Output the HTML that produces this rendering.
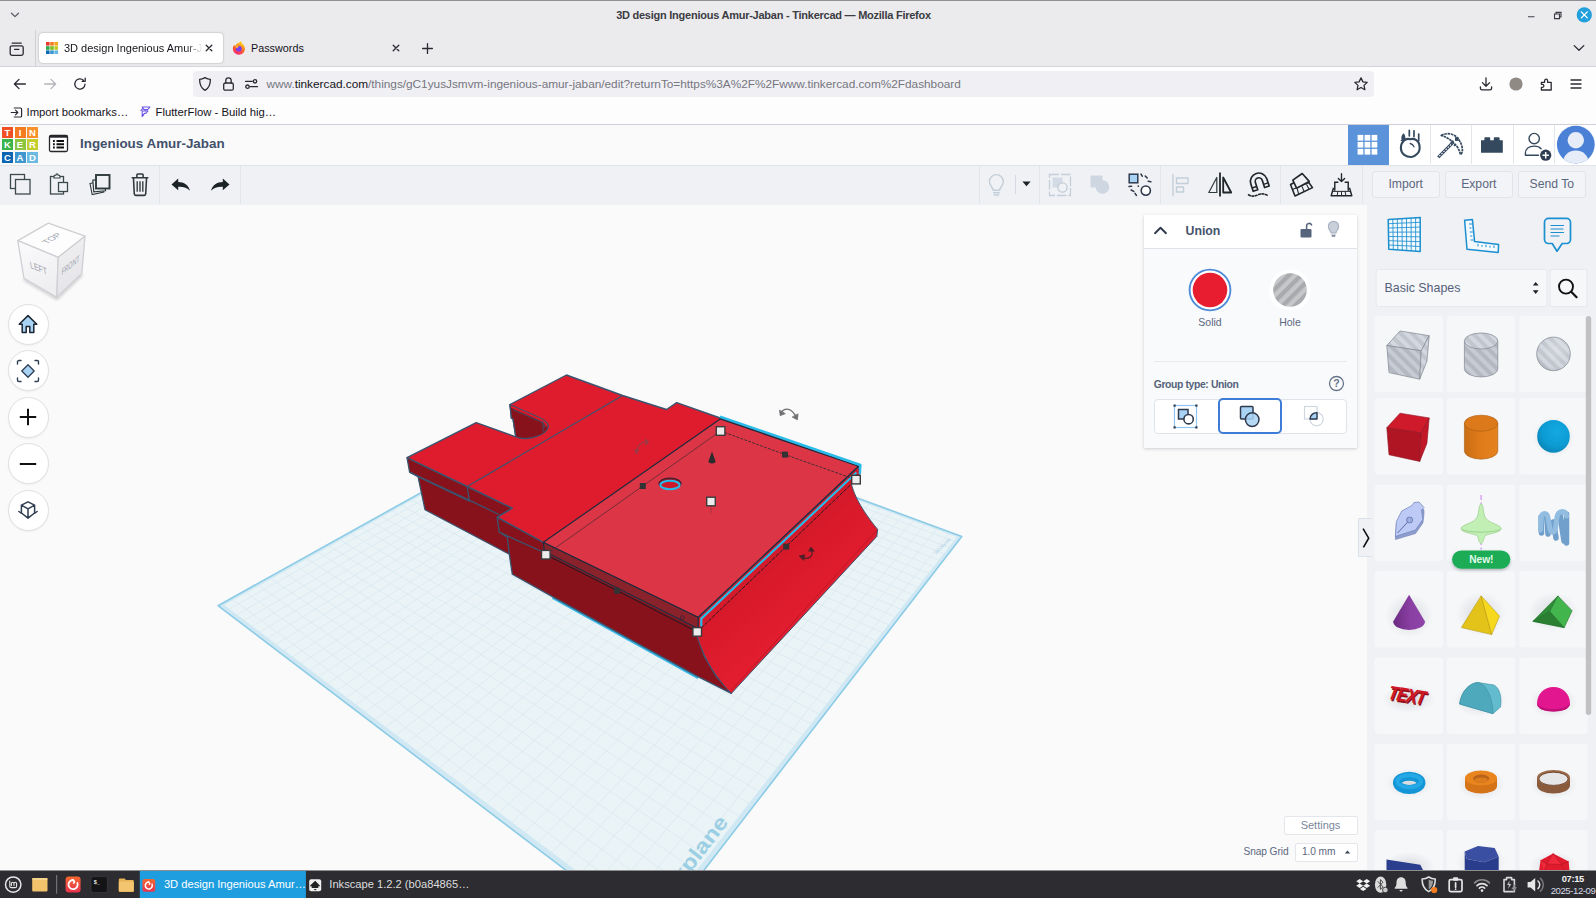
<!DOCTYPE html>
<html lang="en">
<head>
<meta charset="utf-8">
<title>3D design Ingenious Amur-Jaban - Tinkercad</title>
<style>
*{box-sizing:border-box;margin:0;padding:0}
html,body{width:1596px;height:898px;overflow:hidden;background:#fafafa;font-family:"Liberation Sans","DejaVu Sans",sans-serif;color:#15141a}
.abs{position:absolute}
#root{position:relative;width:1596px;height:898px;overflow:hidden}
/* ---------- firefox chrome ---------- */
#titlebar{left:0;top:0;width:1596px;height:30px;background:#ebebee;border-top:1px solid #8f8f96}
#titlebar .t{left:0;width:1547px;top:8px;text-align:center;font-size:11px;font-weight:bold;color:#3c3c42;letter-spacing:-0.245px}
#tabbar{left:0;top:30px;width:1596px;height:36px;background:#ebebee}
.tab{top:33px;height:30px;border-radius:4px;font-size:11.5px;color:#15141a}
#tab1{left:39px;width:184px;background:#fff;box-shadow:0 0 2px rgba(0,0,0,.35)}
#navbar{left:0;top:66px;width:1596px;height:35px;background:#fdfdfe;border-top:1px solid #d4d4da}
#urlbar{left:193px;top:71px;width:1181px;height:26px;background:#f0f0f4;border-radius:4px}
#bookbar{left:0;top:101px;width:1596px;height:23px;background:#fdfdfe;font-size:11.5px;color:#15141a}
#chromeline{left:0;top:124px;width:1596px;height:1px;background:#cfcfd8}

.ico{position:absolute;overflow:visible}
.ico *{vector-effect:none}
.s15{fill:none;stroke:#2b2a33;stroke-width:1.3;stroke-linecap:round;stroke-linejoin:round}
.tabtxt{top:8.500px;font-size:11px;white-space:nowrap;overflow:hidden}
#urltxt{left:266.5px;top:77px;font-size:11.84px;color:#76767f;white-space:nowrap;letter-spacing:-0.02px}
#urltxt b{font-weight:normal;color:#15141a}
.bm{top:106px;font-size:11.3px;white-space:nowrap;color:#15141a}
/* ---------- tinkercad ---------- */
.navb{position:absolute;left:7.500px;width:41px;height:41px;margin-top:-.500px;border-radius:50%;background:#fff;border:1px solid #e0e0e3;box-shadow:0 1px 2px rgba(0,0,0,.05)}
#insp{left:1144px;top:214.500px;width:212.500px;height:233.500px;background:#f9fafb;box-shadow:0 1px 3px rgba(40,50,70,.22)}
#insp .hd{left:0;top:0;width:100%;height:34px;background:#fff;border-bottom:1px solid #dfe2e8}
.lbl{position:absolute;font-size:10.500px;color:#5b6780;text-align:center;white-space:nowrap}

.tki{fill:none;stroke:#2f3a3d;stroke-width:1.400;stroke-linejoin:round;stroke-linecap:round}
.tkf{fill:none;stroke:#c3ced9;stroke-width:1.400;stroke-linejoin:round;stroke-linecap:round}
.vsep{position:absolute;width:1px;background:#e2e5ea}
.tbtn{position:absolute;top:171px;height:27px;border:1px solid #e1e4e9;border-radius:3px;background:#f3f4f7;font-size:12.200px;color:#5b6780;text-align:center;line-height:24px}
#tkname{left:80px;top:136px;font-size:13.400px;font-weight:bold;color:#42516a;white-space:nowrap;letter-spacing:0}

#tkhead{left:0;top:125px;width:1596px;height:41px;background:#fafafb;border-bottom:1px solid #dfe2e8}
#tktool{left:0;top:166px;width:1596px;height:39.500px;background:#f0f1f4;border-bottom:1px solid #e4e6ea}
#viewport{left:0;top:205px;width:1367px;height:665px;background:#fafafa;overflow:hidden}
#side{left:1367px;top:205px;width:229px;height:665px;background:#f0f1f4;overflow:hidden}
#taskbar{left:0;top:870px;width:1596px;height:28px;background:#2d2c31;border-top:1px solid #8e8e91}
</style>
</head>
<body>
<div id="root">

<!-- ===== Firefox title bar ===== -->
<div id="titlebar" class="abs">
  <div class="abs t">3D design Ingenious Amur-Jaban - Tinkercad — Mozilla Firefox</div>
</div>
<svg class="ico" style="left:9px;top:10px" width="12" height="10" viewBox="0 0 12 10"><path class="s15" style="stroke:#5b5b66" d="M2.5 3.2 L6 6.6 L9.5 3.2"/></svg>
<!-- window buttons -->
<svg class="ico" style="left:1524px;top:6px" width="70" height="18" viewBox="0 0 70 18">
  <path d="M4 10.7 H10.5" stroke="#5b5b66" stroke-width="1.2" fill="none"/>
  <path d="M30.5 8 h5 v4.6 h-5 z M32 8 V6.4 h5 v4.6 h-1.4" stroke="#3a3a44" stroke-width="1.1" fill="none"/>
  <circle cx="60.3" cy="8.9" r="7.6" fill="#229fdd"/>
  <path d="M57.3 5.9 L63.3 11.9 M63.3 5.9 L57.3 11.9" stroke="#fff" stroke-width="1.3" stroke-linecap="round"/>
</svg>
<div id="tabbar" class="abs"></div>
<div class="abs" style="left:35px;top:30px;width:1px;height:36px;background:#cfcfd6"></div>
<!-- firefox view icon -->
<svg class="ico" style="left:9px;top:41.500px" width="16" height="15" viewBox="0 0 16 15">
  <path class="s15" d="M3.2 1.2 H12.2"/>
  <rect class="s15" x="1.2" y="3.8" width="13" height="9.6" rx="1.8"/>
  <path class="s15" d="M5.6 7.4 H9.8"/>
</svg>
<div id="tab1" class="abs tab">
  <svg class="ico" style="left:7px;top:9px" width="12" height="12" viewBox="0 0 12 12">
    <rect x="0" y="0" width="3.6" height="3.6" fill="#e8382d"/><rect x="4.2" y="0" width="3.6" height="3.6" fill="#f47b20"/><rect x="8.4" y="0" width="3.6" height="3.6" fill="#f9a51a"/>
    <rect x="0" y="4.2" width="3.6" height="3.6" fill="#2eaa4a"/><rect x="4.2" y="4.2" width="3.6" height="3.6" fill="#7cbd26"/><rect x="8.4" y="4.2" width="3.6" height="3.6" fill="#c2c922"/>
    <rect x="0" y="8.4" width="3.6" height="3.6" fill="#0c69b4"/><rect x="4.2" y="8.4" width="3.6" height="3.6" fill="#3a96cf"/><rect x="8.4" y="8.4" width="3.6" height="3.6" fill="#66b9e0"/>
  </svg>
  <div class="abs tabtxt" style="left:25px;width:139px;-webkit-mask-image:linear-gradient(90deg,#000 122px,transparent 139px);mask-image:linear-gradient(90deg,#000 122px,transparent 139px)">3D design Ingenious Amur-Jaban - Tinkercad</div>
  <svg class="ico" style="left:165px;top:10px" width="10" height="10" viewBox="0 0 10 10"><path d="M2.200 2.200 L7.800 7.800 M7.800 2.200 L2.200 7.800" stroke="#2b2a33" stroke-width="1.3" stroke-linecap="round"/></svg>
</div>
<div class="abs tab" style="left:226px;width:184px">
  <svg class="ico" style="left:6px;top:8px" width="14" height="14" viewBox="0 0 14 14">
    <defs><linearGradient id="ffg" x1=".7" y1="0" x2=".3" y2="1"><stop offset="0" stop-color="#ffe226"/><stop offset=".35" stop-color="#ff9a1e"/><stop offset=".7" stop-color="#ff4a3a"/><stop offset="1" stop-color="#f5237e"/></linearGradient></defs>
    <path d="M7 1.600 c.8 -.2 1.400 -.8 1.700 -1.500 c1 1 1.500 2 1.700 3 c1.300 .8 2.600 2.600 2.600 4.600 a6.100 6.100 0 0 1 -12.200 0 c0 -2 .8 -3.400 1.700 -4.300 c-.1 .8 .1 1.500 .5 1.900 c.8 -1.700 2.200 -3.100 4 -3.700z" fill="url(#ffg)"/>
    <circle cx="6.800" cy="7.700" r="2.900" fill="#7a3df0"/>
    <path d="M3.700 5.300 c1.300 -.7 3 -.5 3.900 .4 c-1.400 0 -2.200 .7 -2.400 1.700 c-.9 -.4 -1.500 -1.200 -1.500 -2.100z" fill="#ffb52e"/>
  </svg>
  <div class="abs tabtxt" style="left:25px;width:130px;font-size:10.8px">Passwords</div>
  <svg class="ico" style="left:165px;top:10px" width="10" height="10" viewBox="0 0 10 10"><path d="M2.200 2.200 L7.800 7.800 M7.800 2.200 L2.200 7.800" stroke="#2b2a33" stroke-width="1.3" stroke-linecap="round"/></svg>
</div>
<svg class="ico" style="left:421px;top:42px" width="13" height="13" viewBox="0 0 13 13"><path d="M6.5 1.6 V11.400 M1.6 6.5 H11.400" stroke="#2b2a33" stroke-width="1.3" stroke-linecap="round"/></svg>
<svg class="ico" style="left:1572px;top:43px" width="14" height="10" viewBox="0 0 14 10"><path class="s15" d="M2.2 2.600 L7 7.300 L11.800 2.600"/></svg>

<div id="navbar" class="abs"></div>
<!-- back / forward / reload -->
<svg class="ico" style="left:12px;top:76px" width="16" height="16" viewBox="0 0 16 16"><path class="s15" d="M13.400 8 H2.600 M7 3.400 L2.400 8 L7 12.600"/></svg>
<svg class="ico" style="left:42px;top:76px" width="16" height="16" viewBox="0 0 16 16"><path class="s15" style="stroke:#b4b4bb" d="M2.600 8 H13.400 M9 3.400 L13.600 8 L9 12.600"/></svg>
<svg class="ico" style="left:72px;top:76px" width="16" height="16" viewBox="0 0 16 16"><path class="s15" d="M13 8.200 a5.100 5.100 0 1 1 -1.600 -3.900 M13.200 2.200 V5.300 H10.100"/></svg>
<div id="urlbar" class="abs"></div>
<svg class="ico" style="left:198px;top:76px" width="14" height="16" viewBox="0 0 14 16"><path class="s15" d="M7 1.600 C5 2.900 3.200 3.300 1.600 3.300 C1.600 8.800 3.200 12.400 7 14.400 C10.800 12.400 12.400 8.800 12.400 3.300 C10.800 3.300 9 2.900 7 1.600z"/></svg>
<svg class="ico" style="left:222px;top:76px" width="13" height="16" viewBox="0 0 13 16"><rect class="s15" x="1.700" y="7" width="9.600" height="7.200" rx="1.500"/><path class="s15" d="M3.800 7 V4.600 a2.700 2.700 0 0 1 5.400 0 V7"/></svg>
<svg class="ico" style="left:244px;top:78px" width="15" height="12" viewBox="0 0 15 12"><path class="s15" d="M1.500 3.300 H8.300 M6.200 8.700 H13.500"/><circle class="s15" cx="11" cy="3.300" r="1.700"/><circle class="s15" cx="3.500" cy="8.700" r="1.700"/></svg>
<div id="urltxt" class="abs">www.<b>tinkercad.com</b>/things/gC1yusJsmvm-ingenious-amur-jaban/edit?returnTo=https%3A%2F%2Fwww.tinkercad.com%2Fdashboard</div>
<svg class="ico" style="left:1353px;top:76px" width="16" height="16" viewBox="0 0 16 16"><path class="s15" d="M8 1.900 L9.900 5.900 L14.200 6.400 L11 9.400 L11.900 13.700 L8 11.500 L4.100 13.700 L5 9.400 L1.800 6.400 L6.100 5.900z"/></svg>
<svg class="ico" style="left:1478px;top:76px" width="16" height="16" viewBox="0 0 16 16"><path class="s15" d="M8 1.800 V10 M4.400 6.600 L8 10.200 L11.600 6.600 M2.400 10.800 V12.200 a1.600 1.600 0 0 0 1.600 1.600 H12 a1.600 1.600 0 0 0 1.600 -1.600 V10.800"/></svg>
<svg class="ico" style="left:1509px;top:77px" width="14" height="14" viewBox="0 0 14 14"><circle cx="7" cy="7" r="6.600" fill="#8f8a84"/></svg>
<svg class="ico" style="left:1539px;top:76px" width="16" height="16" viewBox="0 0 16 16"><path class="s15" d="M2.400 6.300 H5.600 V4.700 a1.500 1.500 0 1 1 3 0 V6.300 H12.200 V14 H2.400 V11.300 H3.400 a1.500 1.500 0 1 0 0 -3 H2.400z"/></svg>
<svg class="ico" style="left:1569px;top:77px" width="14" height="14" viewBox="0 0 14 14"><path d="M2 3 H12 M2 7 H12 M2 11 H12" stroke="#2b2a33" stroke-width="1.300" stroke-linecap="round"/></svg>

<div id="bookbar" class="abs"></div>
<svg class="ico" style="left:10px;top:106px" width="13" height="13" viewBox="0 0 13 13"><path class="s15" style="stroke-width:1.200" d="M4.200 2 H10.600 a1 1 0 0 1 1 1 V10 a1 1 0 0 1 -1 1 H4.200 M1.200 6.500 H7.600 M5.500 4.200 L7.800 6.500 L5.500 8.800"/></svg>
<div class="abs bm" style="left:26.500px">Import bookmarks…</div>
<svg class="ico" style="left:139px;top:105px" width="13" height="14" viewBox="0 0 13 14"><path d="M3.200 2 H11 L8.600 4.600 H5 Z M3.200 6 H9 L6.800 8.400 H5.400 L3.200 10.800 V8.400 Z M1.600 5.800 L3.800 3.400 M2.800 12 L5.200 9.400" fill="none" stroke="#6a55e6" stroke-width="1.100" stroke-linejoin="round"/></svg>
<div class="abs bm" style="left:155.500px">FlutterFlow - Build hig…</div>
<div id="chromeline" class="abs"></div>

<!-- ===== Tinkercad ===== -->

<div id="tkhead" class="abs"></div>
<div class="abs" style="left:2px;top:126.5px;width:11px;height:11px;background:#f04e23;color:#fff;font-size:9.500px;font-weight:bold;text-align:center;line-height:11.500px">T</div><div class="abs" style="left:14.5px;top:126.5px;width:11px;height:11px;background:#f47b20;color:#fff;font-size:9.500px;font-weight:bold;text-align:center;line-height:11.500px">I</div><div class="abs" style="left:27px;top:126.5px;width:11px;height:11px;background:#f9922b;color:#fff;font-size:9.500px;font-weight:bold;text-align:center;line-height:11.500px">N</div><div class="abs" style="left:2px;top:139px;width:11px;height:11px;background:#3bb54a;color:#fff;font-size:9.500px;font-weight:bold;text-align:center;line-height:11.500px">K</div><div class="abs" style="left:14.5px;top:139px;width:11px;height:11px;background:#8cc63e;color:#fff;font-size:9.500px;font-weight:bold;text-align:center;line-height:11.500px">E</div><div class="abs" style="left:27px;top:139px;width:11px;height:11px;background:#c4cf2e;color:#fff;font-size:9.500px;font-weight:bold;text-align:center;line-height:11.500px">R</div><div class="abs" style="left:2px;top:151.5px;width:11px;height:11px;background:#0b67b2;color:#fff;font-size:9.500px;font-weight:bold;text-align:center;line-height:11.500px">C</div><div class="abs" style="left:14.5px;top:151.5px;width:11px;height:11px;background:#3f97d0;color:#fff;font-size:9.500px;font-weight:bold;text-align:center;line-height:11.500px">A</div><div class="abs" style="left:27px;top:151.5px;width:11px;height:11px;background:#6abbe3;color:#fff;font-size:9.500px;font-weight:bold;text-align:center;line-height:11.500px">D</div>
<svg class="ico" style="left:48px;top:134px" width="21" height="19" viewBox="0 0 21 19">
  <rect x="1.500" y="1.500" width="18" height="16" rx="1.500" fill="#fff" stroke="#26272b" stroke-width="1.300"/>
  <rect x="1.500" y="1.500" width="18" height="2.200" fill="#26272b"/>
  <path d="M5 7 h1.800 M8.500 7 h7.500 M5 10.300 h1.800 M8.500 10.300 h7.500 M5 13.600 h1.800 M8.500 13.600 h7.500" stroke="#111" stroke-width="2" fill="none"/>
</svg>
<div id="tkname" class="abs">Ingenious Amur-Jaban</div>
<!-- right header buttons -->
<div class="abs" style="left:1347.500px;top:125px;width:248.500px;height:39.500px;background:#fff"></div>
<div class="abs" style="left:1347.500px;top:125px;width:41px;height:39.500px;background:#5b93da"></div>
<svg class="ico" style="left:1357px;top:134px" width="22" height="22" viewBox="0 0 22 22"><g fill="#fff">
<rect x=".6" y=".9" width="5.700" height="5.700"/><rect x="7.600" y=".9" width="5.700" height="5.700"/><rect x="14.600" y=".9" width="5.700" height="5.700"/>
<rect x=".6" y="7.900" width="5.700" height="5.700"/><rect x="7.600" y="7.900" width="5.700" height="5.700"/><rect x="14.600" y="7.900" width="5.700" height="5.700"/>
<rect x=".6" y="14.900" width="5.700" height="5.700"/><rect x="7.600" y="14.900" width="5.700" height="5.700"/><rect x="14.600" y="14.900" width="5.700" height="5.700"/></g></svg>
<div class="vsep" style="left:1430px;top:125px;height:39px"></div>
<div class="vsep" style="left:1471px;top:125px;height:39px"></div>
<div class="vsep" style="left:1513px;top:125px;height:39px"></div>
<div class="vsep" style="left:1554px;top:125px;height:39px"></div>
<!-- sim lab (apple) -->
<svg class="ico" style="left:1390px;top:125px" width="40" height="40" viewBox="1390 125 40 40">
  <path d="M1410.200,139.200 C1405,137.500 1400.600,142.500 1400.900,148.500 C1401.200,153.800 1406,157.200 1411.500,157 C1414,157 1415.500,155.500 1417,154 C1419.500,152 1420,148.500 1419.400,145 C1418.600,141 1415,138 1410.200,139.200z" fill="none" stroke="#34495e" stroke-width="2.100" stroke-linejoin="round"/>
  <path d="M1410.200,143.500 C1412,144 1413.300,145.200 1414,146.800" fill="none" stroke="#34495e" stroke-width="1.300" stroke-linecap="round"/>
  <path d="M1409.300,130.400 V135.800 M1414,130.800 V136.600 M1418.700,134 V140.600" stroke="#34495e" stroke-width="1.700" stroke-linecap="round" fill="none"/>
  <path d="M1403.800,133.200 C1405.800,135.600 1405.800,138.600 1404.600,141 L1400.200,141 L1401.600,139.800 C1400.800,137.400 1401.600,134.800 1403.800,133.200z" fill="#34495e"/>
</svg>
<!-- pickaxe -->
<svg class="ico" style="left:1431px;top:125px" width="40" height="40" viewBox="1431 125 40 40">
  <path d="M1439.300,156.200 L1452.200,143.200" stroke="#34495e" stroke-width="3" stroke-linecap="square" fill="none"/>
  <path d="M1439.300,156.200 L1452.200,143.200" stroke="#fff" stroke-width="1.100" stroke-dasharray="1.500 1.500" fill="none"/>
  <path d="M1441.200,135.400 C1446,133 1451,133.200 1455,135.800 C1459.500,139 1462.200,144.500 1462.400,150 C1462.400,152 1461.800,153.800 1460.400,154.600 C1459.600,150 1457.200,146 1453.800,143.200 L1450.800,140.400 C1448,138 1445,136.800 1441.200,135.400z" fill="#fff" stroke="#34495e" stroke-width="1.700" stroke-linejoin="round" stroke-dasharray="2.600 .7"/>
  <rect x="1455" y="137.300" width="3.600" height="3.600" fill="#34495e"/>
  <path d="M1451,143 l2.400,-2.400 M1454,146 l1.500,-1.500" stroke="#34495e" stroke-width="1.600" fill="none"/>
</svg>
<!-- brick -->
<svg class="ico" style="left:1480px;top:135px" width="24" height="19" viewBox="1480 135 24 19">
  <path d="M1481,140.200 H1484.400 V138 a.8 .8 0 0 1 .8 -.8 H1489.400 a.8 .8 0 0 1 .8 .8 V140.200 H1493.800 V138 a.8 .8 0 0 1 .8 -.8 H1498.800 a.8 .8 0 0 1 .8 .8 V140.200 H1502.800 V152.800 H1481z" fill="#34495e"/>
</svg>
<!-- person plus -->
<svg class="ico" style="left:1520px;top:130px" width="32" height="32" viewBox="0 0 32 32">
  <circle cx="14.200" cy="8.600" r="5.200" fill="none" stroke="#34485f" stroke-width="1.400"/>
  <path d="M5.400 25.200 V23.500 c0 -4.600 3.400 -7.400 8.800 -7.400 c3 0 5.400 .9 6.900 2.600 M5.400 25.200 H18.500" fill="none" stroke="#34485f" stroke-width="1.400" stroke-linecap="round"/>
  <circle cx="25.700" cy="25.200" r="5.600" fill="#2f3d52"/>
  <path d="M25.700 22 V28.400 M22.500 25.200 H28.900" stroke="#fff" stroke-width="1.500"/>
</svg>
<!-- avatar -->
<svg class="ico" style="left:1556px;top:124.500px" width="40" height="40" viewBox="0 0 40 40">
  <defs><clipPath id="avc"><circle cx="19.800" cy="19.600" r="18.900"/></clipPath></defs>
  <circle cx="19.800" cy="19.600" r="18.900" fill="#4a81d7"/>
  <g clip-path="url(#avc)"><circle cx="19.800" cy="15.200" r="8.200" fill="#e6edf9"/><ellipse cx="19.800" cy="36.500" rx="12.500" ry="11" fill="#e6edf9"/></g>
</svg>

<div id="tktool" class="abs"></div>
<!-- left tools -->
<svg class="ico" style="left:9px;top:173px" width="23" height="23" viewBox="0 0 23 23"><rect x="1.500" y="1.500" width="14" height="14" fill="#f0f1f4" stroke="#3d4a4c" stroke-width="1.300"/><rect x="6.500" y="6.500" width="14.500" height="14.500" fill="#f0f1f4" stroke="#3d4a4c" stroke-width="1.300"/></svg>
<svg class="ico" style="left:49px;top:173px" width="21" height="23" viewBox="0 0 21 23"><rect x="1.500" y="3.500" width="13" height="17.500" fill="#f0f1f4" stroke="#3d4a4c" stroke-width="1.300"/><path d="M5 3.600 c0 -1 .6 -1.500 1.600 -1.500 h.300 c.100 -.8 .5 -1.200 1.100 -1.200 s1 .4 1.100 1.200 h.300 c1 0 1.600 .5 1.600 1.500 v1.400 H5z" fill="#f0f1f4" stroke="#3d4a4c" stroke-width="1.200"/><rect x="9.500" y="9.500" width="9" height="9" fill="#f0f1f4" stroke="#3d4a4c" stroke-width="1.300"/></svg>
<svg class="ico" style="left:88px;top:173px" width="24" height="24" viewBox="0 0 24 24"><g fill="#f0f1f4" stroke="#2f3a3d"><path d="M2 10.500 L13.500 8 L15.800 19 L4.200 21.500z" stroke-width="1.100"/><path d="M4.800 7.200 L16.600 6.200 L17.500 17.800 L5.800 18.800z" stroke-width="1.200"/><rect x="8" y="2" width="13.500" height="13.500" stroke-width="1.900"/></g></svg>
<svg class="ico" style="left:129.500px;top:171.500px" width="20" height="26" viewBox="0 0 19 25"><path d="M2 5.500 H17 M6.500 5.200 V3 a1 1 0 0 1 1 -1 H11.500 a1 1 0 0 1 1 1 V5.200 M3.200 5.800 L4 21 a1.500 1.500 0 0 0 1.500 1.500 H13.500 a1.500 1.500 0 0 0 1.500 -1.500 L15.800 5.800" fill="#f0f1f4" stroke="#2f3a3d" stroke-width="1.500" stroke-linecap="round"/><path d="M6.800 9 V19 M9.500 9 V19 M12.200 9 V19" stroke="#2f3a3d" stroke-width="1.300" fill="none"/></svg>
<div class="vsep" style="left:159px;top:165px;height:39px"></div>
<svg class="ico" style="left:170px;top:177px" width="22" height="16" viewBox="0 0 22 16"><path d="M8.200 1.500 V5 C14 5 18.600 8 20 13.800 C17.200 10.600 13.500 9.600 8.200 9.800 V13.300 L1.500 7.400z" fill="#1c2326"/></svg>
<svg class="ico" style="left:209px;top:177px" width="22" height="16" viewBox="0 0 22 16"><path d="M13.800 1.500 V5 C8 5 3.400 8 2 13.800 C4.800 10.600 8.500 9.600 13.800 9.800 V13.300 L20.500 7.400z" fill="#1c2326"/></svg>
<div class="vsep" style="left:240px;top:165px;height:39px"></div>

<!-- right tools -->
<div class="vsep" style="left:979px;top:165px;height:39px"></div>
<svg class="ico" style="left:986px;top:172px" width="22" height="26" viewBox="0 0 22 26"><path class="tkf" d="M7.200 18.200 c0 -2.600 -3.800 -4.400 -3.800 -8.600 a7 7 0 0 1 14 0 c0 4.200 -3.800 6 -3.800 8.600z M7.600 20.800 H13.200 M8.200 23 H12.600"/></svg>
<div class="vsep" style="left:1015px;top:175px;height:19px;background:#d5dae2"></div>
<svg class="ico" style="left:1021px;top:180px" width="11" height="8" viewBox="0 0 11 8"><path d="M1.400 1.600 H9.600 L5.500 6.200z" fill="#1c2326"/></svg>
<div class="vsep" style="left:1039px;top:165px;height:39px"></div>
<!-- group (faded) -->
<svg class="ico" style="left:1047px;top:172px" width="26" height="26" viewBox="0 0 26 26">
  <rect x="2.500" y="2.500" width="21" height="21" fill="none" stroke="#c3ced9" stroke-width="1.300" stroke-dasharray="9.500 2"/>
  <rect x="5.500" y="5.500" width="10" height="10" fill="#d3dce6"/>
  <circle cx="15.500" cy="15.500" r="4.600" fill="#f0f1f4" stroke="#c3ced9" stroke-width="1.400"/>
</svg>
<!-- ungroup (faded) -->
<svg class="ico" style="left:1087px;top:172px" width="26" height="26" viewBox="0 0 26 26"><rect x="3.500" y="3.500" width="12" height="12" rx="1" fill="#cdd6e1"/><circle cx="15.500" cy="15" r="6.800" fill="#cdd6e1"/></svg>
<!-- explode -->
<svg class="ico" style="left:1126px;top:171px" width="28" height="28" viewBox="0 0 28 28">
  <rect x="3.200" y="3.200" width="8.600" height="8.600" fill="#a9d3f5" stroke="#2f3a4d" stroke-width="1.500"/>
  <circle cx="19.800" cy="19.600" r="4.600" fill="#fff" stroke="#2f3a4d" stroke-width="1.600"/>
  <path d="M15 3.200 L16.200 5.200 M19.200 5 L21.200 7 M22.200 10.200 L24.800 10.800 M3 15.500 L5.600 15.200 M5.200 19 L7.800 20.400 M9 22.400 L10.400 24.400 M12.200 15 l.2 .2" stroke="#2f3a4d" stroke-width="1.600" stroke-linecap="round" fill="none"/>
</svg>
<div class="vsep" style="left:1160px;top:165px;height:39px"></div>
<!-- align (faded) -->
<svg class="ico" style="left:1170px;top:172px" width="22" height="26" viewBox="0 0 22 26"><path class="tkf" d="M3 2.500 V23.500"/><rect class="tkf" x="6.500" y="6" width="11.500" height="5.500" fill="#f7f8fa"/><rect class="tkf" x="6.500" y="15" width="7" height="5" fill="#d3dce6"/></svg>
<!-- mirror -->
<svg class="ico" style="left:1206px;top:171px" width="28" height="28" viewBox="0 0 28 28"><path d="M14 1.500 V25.500" stroke="#20262a" stroke-width="1.800" fill="none"/><path d="M10.800 6.500 V21.500 H2.800z" fill="#f0f1f4" stroke="#2f3a3d" stroke-width="1.200" stroke-linejoin="round"/><path d="M17.200 6.500 V21.500 H25.200z" fill="#f0f1f4" stroke="#20262a" stroke-width="1.800" stroke-linejoin="round"/></svg>
<!-- magnet -->
<svg class="ico" style="left:1245px;top:171px" width="28" height="28" viewBox="0 0 28 28">
  <g transform="rotate(-18 14 11)"><path d="M5.600 18 V10.400 a8.400 8.400 0 0 1 16.800 0 V18 H17.600 V10.400 a3.600 3.600 0 0 0 -7.200 0 V18z" fill="#f0f1f4" stroke="#20262a" stroke-width="1.700" stroke-linejoin="round"/><path d="M5.600 14.600 H10.400 M17.600 14.600 H22.400" stroke="#20262a" stroke-width="1.400"/></g>
  <path d="M3.500 23.800 c3 1.800 6 1.600 9 .2 c3.500 -1.600 6.500 -1.600 11 .8" fill="none" stroke="#20262a" stroke-width="1.600" stroke-dasharray="1.800 1.700" stroke-linecap="round"/>
</svg>
<div class="vsep" style="left:1280px;top:165px;height:39px"></div>
<!-- workplane tool -->
<svg class="ico" style="left:1288px;top:171px" width="28" height="28" viewBox="0 0 28 28">
  <path d="M2.500 13.500 L17 6.200 L24.500 16.600 L7 25z" fill="#f0f1f4" stroke="#20262a" stroke-width="1.600" stroke-linejoin="round"/>
  <path d="M4.400 18.400 L21.400 11.400 M9.200 17.600 L10.600 22.800 M14 15.400 L16 20.400 M18.600 13.400 L21 18" stroke="#20262a" stroke-width="1.100" fill="none"/>
  <path d="M4.800 9.200 L14.200 2.500 L21.200 10.400 L8.600 17.200z" fill="#f0f1f4" stroke="#20262a" stroke-width="1.600" stroke-linejoin="round"/>
</svg>
<!-- drop to plane -->
<svg class="ico" style="left:1328.500px;top:171.500px" width="25" height="26" viewBox="0 0 27 29">
  <path d="M13.500 2 V10.500 M10 7.200 L13.500 10.700 L17 7.200" fill="none" stroke="#20262a" stroke-width="1.500" stroke-linecap="round" stroke-linejoin="round"/>
  <path d="M6 20.800 V11.500 H10 M17 11.500 H21 V20.800" fill="none" stroke="#20262a" stroke-width="1.600"/>
  <path d="M4.600 17.500 L2 26.500 H25 L22.400 17.500" fill="none" stroke="#20262a" stroke-width="1.600" stroke-linejoin="round"/>
  <path d="M3.200 21.600 H23.800 M9.500 21.600 L8.600 26.500 M17.500 21.600 L18.400 26.500 M13.500 21.600 V26.500" stroke="#20262a" stroke-width="1.100" fill="none"/>
</svg>
<div class="vsep" style="left:1362px;top:165px;height:39px"></div>
<div class="tbtn" style="left:1372px;width:67.500px">Import</div>
<div class="tbtn" style="left:1445px;width:67.500px">Export</div>
<div class="tbtn" style="left:1518px;width:67.500px">Send To</div>

<div id="viewport" class="abs">
<!--SCENE-->
<svg class="abs" style="left:0;top:0" width="1367" height="665" viewBox="0 205 1367 665">
<defs><linearGradient id="rampg" gradientUnits="userSpaceOnUse" x1="760" y1="520" x2="830" y2="600"><stop offset="0" stop-color="#c71828"/><stop offset=".45" stop-color="#d81a2b"/><stop offset="1" stop-color="#e21d2f"/></linearGradient></defs>
<polygon points="218.0,605.7 588.8,399.2 961.8,536.4 652.9,936.4" fill="#eaf3f6"/>
<path d="M218.0,605.7 L588.8,399.2 L961.8,536.4 L652.9,936.4 Z M224.2,605.1 L651.9,927.8 L956.8,536.9 L589.0,401.1 Z" fill="#cfe8f3" fill-rule="evenodd"/>
<path d="M225.3,611.3 L596.0,401.9 M231.2,598.3 L665.5,920.1 M232.8,616.9 L603.3,404.5 M244.1,591.1 L677.7,904.2 M240.3,622.7 L610.7,407.3 M256.8,584.1 L689.6,888.9 M248.0,628.5 L618.2,410.0 M269.2,577.2 L701.0,874.1 M255.9,634.5 L625.7,412.8 M281.3,570.4 L712.1,859.7 M263.8,640.6 L633.4,415.6 M293.2,563.8 L722.9,845.7 M271.9,646.7 L641.1,418.4 M304.8,557.4 L733.4,832.2 M280.2,653.0 L649.0,421.3 M316.2,551.0 L743.5,819.0 M288.6,659.4 L656.9,424.3 M327.4,544.8 L753.4,806.3 M297.2,665.9 L664.9,427.2 M338.3,538.7 L763.0,793.9 M305.9,672.5 L673.1,430.2 M349.1,532.7 L772.3,781.8 M314.7,679.3 L681.3,433.2 M359.6,526.9 L781.3,770.1 M323.8,686.1 L689.6,436.3 M369.9,521.1 L790.2,758.7 M333.0,693.1 L698.1,439.4 M380.0,515.5 L798.7,747.6 M342.4,700.3 L706.6,442.5 M390.0,509.9 L807.1,736.7 M351.9,707.6 L715.3,445.7 M399.7,504.5 L815.2,726.2 M361.7,715.0 L724.0,448.9 M409.3,499.2 L823.1,716.0 M371.6,722.5 L732.9,452.2 M418.6,494.0 L830.9,706.0 M381.8,730.2 L741.9,455.5 M427.9,488.8 L838.4,696.2 M392.1,738.1 L751.0,458.9 M436.9,483.8 L845.7,686.7 M402.7,746.1 L760.2,462.3 M445.8,478.8 L852.9,677.5 M413.4,754.3 L769.6,465.7 M454.5,474.0 L859.9,668.4 M424.4,762.6 L779.0,469.2 M463.1,469.2 L866.7,659.6 M435.6,771.2 L788.6,472.7 M471.5,464.5 L873.3,651.0 M447.0,779.9 L798.4,476.3 M479.8,459.9 L879.8,642.6 M458.7,788.8 L808.2,479.9 M487.9,455.4 L886.2,634.3 M470.7,797.8 L818.2,483.6 M495.9,450.9 L892.4,626.3 M482.9,807.1 L828.4,487.3 M503.8,446.5 L898.4,618.4 M495.3,816.6 L838.6,491.1 M511.5,442.2 L904.4,610.8 M508.1,826.3 L849.0,494.9 M519.1,438.0 L910.2,603.3 M521.1,836.2 L859.6,498.8 M526.6,433.8 L915.8,595.9 M534.4,846.3 L870.3,502.8 M534.0,429.7 L921.4,588.7 M548.0,856.7 L881.2,506.7 M541.2,425.7 L926.8,581.7 M562.0,867.3 L892.2,510.8 M548.4,421.7 L932.1,574.8 M576.2,878.1 L903.4,514.9 M555.4,417.8 L937.3,568.1 M590.8,889.2 L914.7,519.1 M562.3,414.0 L942.4,561.5 M605.8,900.6 L926.2,523.3 M569.1,410.2 L947.4,555.0 M621.1,912.2 L937.9,527.6 M575.7,406.5 L952.3,548.7 M636.8,924.2 L949.8,532.0 M582.3,402.8 L957.1,542.5" stroke="#d6e8f0" stroke-width="0.65" fill="none"/>
<polygon points="218.0,605.7 588.8,399.2 961.8,536.4 652.9,936.4" fill="none" stroke="#8ccbe6" stroke-width="1.6" stroke-linejoin="round"/>
<text transform="translate(729.2,822.4) rotate(-52.3) scale(1.17,1)" text-anchor="end" font-family="Liberation Sans, sans-serif" font-weight="bold" font-size="21" fill="#9bcfe4">Workplane</text>
<text transform="translate(936,554.5) rotate(-45)" font-family="Liberation Sans, sans-serif" font-size="4" fill="#9cc8de">200.00x200</text>
<path d="M552.4,597.8 L698,678" stroke="#35b6e6" stroke-width="2" fill="none"/>
<polygon points="407.0,457.7 409.6,472.2 418.0,476.7 425.0,509.7 509.3,554.3 512.3,574.3 552.4,596.6 698.0,676.6 731.3,693.4 716.3,676.4 704.3,656.3 697.2,636.3 698.2,628.6 544.4,551.3 543.4,542.3 497.2,517.2 512.3,508.2 467.2,486.5" fill="#87121c" stroke="#3a546f" stroke-width="1.3" stroke-linejoin="round"/>
<path d="M409.6,472.2 L469.2,500.2 L499,514.5 M467.2,486.5 L469.2,500.2 M418,476.7 L470,501.5 M497.2,517.2 L499.2,532.2 L507.3,537.2 L509.3,554.3 M499.2,532.2 L544,552.5" stroke="#3a546f" stroke-width="1.300" fill="none"/>
<path d="M698.2,617.5 L858.5,466.5 L859.6,474 L851.5,484.3 C854,494 860,508 877.6,529.4 L876.8,536.4 L731.3,693.4 C718,680 704,660 697.2,636.3 Z" fill="url(#rampg)" stroke="#3a546f" stroke-width="1" stroke-linejoin="round"/>
<path d="M877.6,529.4 L731.8,689.6" stroke="#b01525" stroke-width="1" fill="none" opacity=".7"/>
<path d="M566.4,375.0 L622.6,395.5 L666.5,409.5 L676.7,402.7 L720.2,418.0 L858.5,466.2 L698.2,617.2 L543.4,542.3 L497.2,517.2 L512.3,508.2 L467.2,486.5 L407.0,457.7 L476.2,422.6 L515.8,436.8 L513,418.9 L511.4,418.3 L509.9,404.5 Z" fill="#df1c2e" stroke="#3a546f" stroke-width="1.400" stroke-linejoin="round"/>
<path d="M509.9,404.5 L540.4,418.1 C545,420.5 548.6,423.5 548.2,427 C547.4,432 541,435.5 533,437.6 C526,439.2 519.500,438.6 515.8,436.8 L513,418.9 L511.4,418.3 Z" fill="#87121c" stroke="#3a546f" stroke-width="1.2" stroke-linejoin="round"/>
<path d="M511.2,406.6 L540,419.400 C544,421.400 546.600,424 546.600,426.500" stroke="#df1c2e" stroke-width="2" fill="none"/>
<path d="M512.700,409.400 L539.500,421.200 C543,422.800 545,425 545,427.500 M542.800,420.600 L543.300,431.800" stroke="#3a546f" stroke-width=".9" fill="none"/>
<path d="M622.6,395.5 L467.2,486.5" stroke="#3a546f" stroke-width="1.2" fill="none"/>
<polygon points="543.4,542.3 698.2,617.2 698.2,628.6 544.4,551.3" fill="#8a222c" stroke="#1d2433" stroke-width="1"/>
<path d="M698.2,617.2 L698.2,628.6" stroke="#3b3040" stroke-width="1" fill="none"/>
<path d="M701.3,626.6 L701.3,618.6 L856.5,472.5" stroke="#27bbea" stroke-width="2.2" fill="none" stroke-linejoin="round"/>
<polygon points="720.2,419 858.5,466.2 698.2,617.2 543.4,542.3" fill="#dc3646" stroke="#1d2a3d" stroke-width="1.2" stroke-linejoin="round"/>
<path d="M720,416.6 L860.4,465 L859.8,474" stroke="#27bbea" stroke-width="2.4" fill="none" stroke-linejoin="round"/>
<ellipse cx="682.3" cy="617.9" rx="1.8" ry="2.3" fill="none" stroke="#3a2030" stroke-width=".9"/>
<path d="M720.6,431 L642.8,486 L545.8,554.7" stroke="#5a2a35" stroke-width=".8" fill="none"/>
<path d="M720.6,431 L785,454.6 L856,479.6" stroke="#3a2a30" stroke-width=".9" stroke-dasharray="3 1.2" fill="none"/>
<path d="M697.2,631.9 L786,546.7 L856,479.6" stroke="#2a1a20" stroke-width="1" stroke-dasharray="4 1.2" fill="none"/>
<path d="M545.8,554.7 L617,590.6 L697.2,631.9" stroke="#1d1a22" stroke-width="1" fill="none"/>
<path d="M711,506 V514" stroke="#7a2a35" stroke-width="1" stroke-dasharray="1.2 1.4" fill="none"/>
<ellipse cx="670" cy="483.6" rx="11.2" ry="5.6" fill="#8f1a25" stroke="#2a2030" stroke-width="1"/>
<ellipse cx="670" cy="485" rx="9.6" ry="4.2" fill="#cc1a2a" stroke="#27bbea" stroke-width="2"/>
<path d="M712,451.5 L715.6,461.5 C715.6,464 708.400,464 708.400,461.5 Z" fill="#2b2b2e"/>
<rect x="716.3" y="426.7" width="8.6" height="8.6" fill="#ececec" stroke="#3a3a3c" stroke-width="1.4"/>
<rect x="851.7" y="475.3" width="8.6" height="8.6" fill="#ececec" stroke="#3a3a3c" stroke-width="1.4"/>
<rect x="541.5" y="550.4" width="8.6" height="8.6" fill="#ececec" stroke="#3a3a3c" stroke-width="1.4"/>
<rect x="692.9" y="627.6" width="8.6" height="8.6" fill="#ececec" stroke="#3a3a3c" stroke-width="1.4"/>
<rect x="706.7" y="497.2" width="8.6" height="8.6" fill="#ececec" stroke="#3a3a3c" stroke-width="1.4"/>
<rect x="782.0" y="451.6" width="6" height="6" fill="#333336"/>
<rect x="639.8" y="483.0" width="6" height="6" fill="#333336"/>
<rect x="783.2" y="543.6" width="6" height="6" fill="#333336"/>
<rect x="614.0" y="587.8" width="6" height="6" fill="#333336"/>
<g fill="none" stroke="#6f6f72" stroke-width="1.4" stroke-linecap="round"><path d="M781,412.5 C785,407 792,408 796,417"/><path d="M779.600,410.500 L780.200,415.600 L785,413.800 Z" fill="#6f6f72" stroke-width=".8"/><path d="M792.500,417.200 L797.400,419.800 L798,414.200 Z" fill="#6f6f72" stroke-width=".8"/></g>
<g fill="none" stroke="#9a3a46" stroke-width="1.1" stroke-linecap="round"><path d="M636.500,452 C637,446 641,441.500 647.500,441.500"/><path d="M645.500,439.500 L648.500,442 L645.800,444.500 Z" fill="#9a3a46"/><path d="M635,449.500 L636.400,453.500 L638.600,450 Z" fill="#9a3a46"/></g>
<g fill="none" stroke="#4a2028" stroke-width="1.150" stroke-linecap="round"><path d="M802,557.500 C808,560 814,557 811.500,549.500"/><path d="M799.500,556 L804.500,554.800 L803.800,560 Z" fill="#4a2028" stroke-width=".8"/><path d="M808.800,550.800 L811,547 L814,551 Z" fill="#4a2028" stroke-width=".8"/></g>
</svg>
<!--/SCENE-->
</div>

<!-- view cube -->
<svg class="ico" style="left:10px;top:215px" width="84" height="90" viewBox="10 215 84 90" font-family="Liberation Sans, sans-serif">
  <defs><filter id="cbl" x="-20%" y="-20%" width="140%" height="140%"><feGaussianBlur stdDeviation="1.500"/></filter>
  <linearGradient id="cfl" x1="0" y1="0" x2=".3" y2="1"><stop offset="0" stop-color="#fbfbfc"/><stop offset="1" stop-color="#eeeef1"/></linearGradient>
  <linearGradient id="cfr" x1="0" y1="0" x2=".2" y2="1"><stop offset="0" stop-color="#f1f1f3"/><stop offset="1" stop-color="#e4e4e8"/></linearGradient></defs>
  <path d="M23.900,279.200 L56.800,298.600 L81.800,274.700" fill="none" stroke="#8e8e94" stroke-width="2.400" filter="url(#cbl)" opacity=".5"/>
  <g stroke="#cfcfd4" stroke-width="1.300" stroke-linejoin="round">
  <polygon points="48.400,223.100 85,236.200 58.200,257.300 17.800,240.600" fill="#fdfdfd"/>
  <polygon points="17.800,240.600 58.200,257.300 56.800,297.400 23.900,278.200" fill="url(#cfl)"/>
  <polygon points="58.200,257.300 85,236.200 81.800,273.500 56.800,297.400" fill="url(#cfr)"/></g>
  <text transform="matrix(.857,-.515,.924,.382,54.800,239.600)" font-size="9" text-anchor="middle" fill="#9a9eab">TOP</text>
  <text transform="matrix(.693,.287,.16,.987,39,271.400)" font-size="10" text-anchor="middle" fill="#9a9eab">LEFT</text>
  <text transform="matrix(.558,-.44,-.035,1,70.400,268.400)" font-size="9.400" text-anchor="middle" fill="#9a9eab">FRONT</text>
</svg>
<div class="navb" style="top:304px"></div>
<div class="navb" style="top:350.500px"></div>
<div class="navb" style="top:397px"></div>
<div class="navb" style="top:443.500px"></div>
<div class="navb" style="top:490px"></div>
<svg class="ico" style="left:17px;top:313px" width="22" height="22" viewBox="0 0 22 22"><path d="M2.200 11.200 L11 2.600 L19.800 11.200 H16.800 V19.400 H12.800 V13.600 H9.200 V19.400 H5.200 V11.200z" fill="#a9d3f5" stroke="#1c2733" stroke-width="1.500" stroke-linejoin="round"/></svg>
<svg class="ico" style="left:16px;top:359px" width="24" height="24" viewBox="0 0 24 24"><path d="M12 5.800 L18.200 12 L12 18.200 L5.800 12z" fill="#a9d3f5" stroke="#2f3d52" stroke-width="1.300" stroke-linejoin="round"/><path d="M1.500 5 V2.800 a1.300 1.300 0 0 1 1.300 -1.300 H5 M19 1.500 H21.200 a1.300 1.300 0 0 1 1.300 1.300 V5 M22.500 19 V21.200 a1.300 1.300 0 0 1 -1.300 1.300 H19 M5 22.500 H2.800 a1.300 1.300 0 0 1 -1.300 -1.300 V19" fill="none" stroke="#2f3d52" stroke-width="1.400" stroke-linecap="round"/></svg>
<svg class="ico" style="left:19px;top:408px" width="18" height="18" viewBox="0 0 18 18"><path d="M9 .8 V17.200 M.8 9 H17.200" stroke="#111" stroke-width="2" fill="none"/></svg>
<svg class="ico" style="left:19px;top:454.500px" width="18" height="18" viewBox="0 0 18 18"><path d="M.8 9 H17.200" stroke="#111" stroke-width="2" fill="none"/></svg>
<svg class="ico" style="left:17px;top:499px" width="22" height="22" viewBox="0 0 22 22"><path d="M11 2.800 L17.600 6.200 V14 L11 19.200 L4.400 14 V6.200z M4.400 6.200 L11 9.800 L17.600 6.200 M11 9.800 V19.200" fill="#fff" stroke="#2f3d52" stroke-width="1.500" stroke-linejoin="round"/><path d="M1.800 12.500 L4.400 14.200 M20.200 12.500 L17.600 14.200" stroke="#2f3d52" stroke-width="1.400" stroke-linecap="round"/></svg>

<!-- inspector -->
<div id="insp" class="abs">
  <div class="abs hd"></div>
  <svg class="ico" style="left:9px;top:10px" width="15" height="11" viewBox="0 0 15 11"><path d="M2 8.200 L7.500 2.800 L13 8.200" fill="none" stroke="#2f3a4d" stroke-width="1.900" stroke-linecap="round" stroke-linejoin="round"/></svg>
  <div class="abs" style="left:41.500px;top:9px;font-size:12.300px;font-weight:bold;color:#45546d">Union</div>
  <svg class="ico" style="left:155px;top:6px" width="15" height="18" viewBox="0 0 15 18"><rect x="1.500" y="8" width="11" height="8.600" rx="1" fill="#56657c"/><path d="M9.200 8 V5 a2.600 2.600 0 0 1 5 -1" fill="none" stroke="#56657c" stroke-width="1.500" stroke-linecap="round" transform="translate(-1.600,0)"/></svg>
  <svg class="ico" style="left:182px;top:5px" width="15" height="20" viewBox="0 0 15 20"><path d="M5 12.800 c0 -2 -2.600 -3.200 -2.600 -6.400 a5.100 5.100 0 0 1 10.200 0 c0 3.200 -2.600 4.400 -2.600 6.400z" fill="#c9d0da" stroke="#aab3c1" stroke-width="1.200"/><path d="M5.200 14.600 H9.800 L9 17 H6z" fill="#8f9aab"/></svg>
  <!-- solid -->
  <svg class="ico" style="left:43px;top:52px" width="46" height="46" viewBox="0 0 46 46"><circle cx="23" cy="23" r="20.400" fill="#fff" stroke="#4f8bd8" stroke-width="1.900"/><circle cx="23" cy="23" r="17.300" fill="#e81d30"/></svg>
  <svg class="ico" style="left:123px;top:52px" width="46" height="46" viewBox="0 0 46 46">
    <defs><pattern id="hs" width="8.600" height="8.600" patternUnits="userSpaceOnUse" patternTransform="rotate(45) translate(2,0)"><rect width="8.600" height="8.600" fill="#c6c7c9"/><rect width="4.300" height="8.600" fill="#a9aaad"/></pattern></defs>
    <circle cx="23" cy="23" r="20.600" fill="#fff"/><circle cx="23" cy="23" r="16.800" fill="url(#hs)"/></svg>
  <div class="lbl" style="left:46px;width:40px;top:101px">Solid</div>
  <div class="lbl" style="left:126px;width:40px;top:101px">Hole</div>
  <div class="abs" style="left:10px;top:146.500px;width:192.500px;height:1px;background:#e8eaee"></div>
  <div class="abs" style="left:9.700px;top:164px;font-size:10.400px;color:#54627a;font-weight:bold;letter-spacing:-0.380px;white-space:nowrap">Group type: Union</div>
  <svg class="ico" style="left:184px;top:160px" width="17" height="17" viewBox="0 0 17 17"><circle cx="8.500" cy="8.500" r="7" fill="none" stroke="#66748a" stroke-width="1.300"/><text x="8.500" y="12.300" font-size="10.500" font-weight="bold" text-anchor="middle" fill="#66748a" font-family="Liberation Sans, sans-serif">?</text></svg>
  <div class="abs" style="left:10px;top:184px;width:192.500px;height:35px;background:#fff;border:1px solid #e0e3e9;border-radius:4px"></div>
  <div class="abs" style="left:74px;top:183.500px;width:64px;height:36px;background:#fff;border:2px solid #3f7cd8;border-radius:5px"></div>
  <svg class="ico" style="left:29px;top:189px" width="26" height="26" viewBox="0 0 26 26">
    <rect x="1.500" y="1.500" width="22" height="22" fill="none" stroke="#8ec5f2" stroke-width="1.200"/>
    <g fill="#2f3a4d"><rect x=".5" y=".5" width="2.200" height="2.200"/><rect x="22.300" y=".5" width="2.200" height="2.200"/><rect x=".5" y="22.300" width="2.200" height="2.200"/><rect x="22.300" y="22.300" width="2.200" height="2.200"/></g>
    <rect x="5.500" y="5.500" width="9.500" height="9.500" fill="#a9d3f5" stroke="#2f3a4d" stroke-width="1.500"/><circle cx="15.600" cy="15.200" r="4.700" fill="#fff" stroke="#2f3a4d" stroke-width="1.600"/></svg>
  <svg class="ico" style="left:93px;top:189px" width="26" height="26" viewBox="0 0 26 26"><rect x="3.500" y="2.500" width="12.500" height="12.500" rx="1" fill="#a9d3f5" stroke="#2f3a4d" stroke-width="1.500"/><circle cx="15.200" cy="15.600" r="6.800" fill="#a9d3f5" fill-opacity=".85" stroke="#2f3a4d" stroke-width="1.500"/></svg>
  <svg class="ico" style="left:157px;top:189px" width="26" height="26" viewBox="0 0 26 26"><rect x="3.500" y="2.500" width="12.500" height="12.500" fill="none" stroke="#cfd6df" stroke-width="1.200"/><circle cx="15.600" cy="15.200" r="6.600" fill="none" stroke="#cfd6df" stroke-width="1.200"/><path d="M16 8.600 V15 H9 A6.800 6.800 0 0 1 16 8.600z" fill="#a9d3f5" stroke="#2f3a4d" stroke-width="1.400" stroke-linejoin="round"/></svg>
</div>

<!-- settings / snap grid -->
<div class="abs" style="left:1283.500px;top:816px;width:74px;height:18.500px;background:#fff;border:1px solid #e4e6eb;border-radius:2px;font-size:11px;color:#7b879c;text-align:center;line-height:16px">Settings</div>
<div class="abs" style="left:1243.500px;top:845.500px;font-size:10.200px;color:#5b6780;white-space:nowrap;letter-spacing:-.100px">Snap Grid</div>
<div class="abs" style="left:1294.500px;top:843px;width:63px;height:18.500px;background:#fff;border:1px solid #e4e6eb;border-radius:2px;font-size:10.200px;color:#5b6780;line-height:16.500px;padding-left:6.500px;letter-spacing:-.100px">1.0 mm</div>
<svg class="ico" style="left:1344px;top:849px" width="7" height="6" viewBox="0 0 7 6"><path d="M.8 4.600 L3.500 1.400 L6.200 4.600z" fill="#3b4658"/></svg>
<div id="side" class="abs">
<!--SIDE-->
<svg class="abs" style="left:0;top:0" width="229" height="665" viewBox="1367 205 229 665" font-family="Liberation Sans, sans-serif">
<defs>
<pattern id="gst" width="8" height="8" patternUnits="userSpaceOnUse" patternTransform="rotate(45)"><rect width="8" height="8" fill="#d3d7df"/><rect width="8" height="4" fill="#c1c5cd"/></pattern>
<pattern id="gst2" width="8" height="8" patternUnits="userSpaceOnUse" patternTransform="rotate(45)"><rect width="8" height="8" fill="#c7cbd3"/><rect width="8" height="4" fill="#b4b8c1"/></pattern>
<radialGradient id="gbl" cx=".6" cy=".35" r=".75"><stop offset="0" stop-color="#14a9e2"/><stop offset=".6" stop-color="#0c9bd3"/><stop offset="1" stop-color="#0a7fb0"/></radialGradient>
<radialGradient id="ggr" cx=".6" cy=".35" r=".75"><stop offset="0" stop-color="#fff" stop-opacity=".25"/><stop offset=".6" stop-color="#fff" stop-opacity="0"/><stop offset="1" stop-color="#5a6070" stop-opacity=".35"/></radialGradient>
<linearGradient id="gor" x1="0" x2="1"><stop offset="0" stop-color="#c96d14"/><stop offset=".5" stop-color="#e07c1a"/><stop offset="1" stop-color="#e5821d"/></linearGradient>
<linearGradient id="gpu" x1="0" x2="1"><stop offset="0" stop-color="#6b2b82"/><stop offset=".55" stop-color="#8a3fa2"/><stop offset="1" stop-color="#8f45a8"/></linearGradient>
<radialGradient id="gsh" cx=".5" cy=".5" r=".5"><stop offset="0" stop-color="#8a8d96" stop-opacity=".28"/><stop offset="1" stop-color="#8a8d96" stop-opacity="0"/></radialGradient>
<filter id="bsh" x="-20%" y="-30%" width="140%" height="190%"><feDropShadow dx="0" dy="1.5" stdDeviation="1.5" flood-color="#30404a" flood-opacity=".35"/></filter>
</defs>
<g fill="none" stroke="#1b8fcf" stroke-width="1.5" stroke-linejoin="round"><path d="M1388.200,219.500 L1420.200,217.400 L1420.200,251.400 L1388.800,249.200 Z" fill="#f4f9fd"/>
<path d="M1392.8,219.2 L1393.3,249.5 M1388.3,223.7 L1420.2,222.3 M1397.3,218.9 L1397.8,249.8 M1388.4,228.0 L1420.2,227.1 M1401.9,218.6 L1402.3,250.1 M1388.5,232.2 L1420.2,232.0 M1406.5,218.3 L1406.7,250.5 M1388.5,236.5 L1420.2,236.8 M1411.1,218.0 L1411.2,250.8 M1388.6,240.7 L1420.2,241.7 M1415.6,217.7 L1415.7,251.1 M1388.7,245.0 L1420.2,246.5" stroke-width=".850"/></g>
<g fill="#f4f9fd" stroke="#1b8fcf" stroke-width="1.500" stroke-linejoin="round"><path d="M1464.600,220.200 L1472.400,219.400 L1474.600,241.600 L1498.600,244.400 L1498.200,252.400 L1467,249.200 Z"/><path d="M1469,224 h3 M1469.400,228 h2 M1469.800,232 h3 M1470.200,236 h2 M1470.600,240 h3 M1478,246.400 v-2.600 M1482,246.800 v-1.800 M1486,247.200 v-2.600 M1490,247.600 v-1.800 M1494,248 v-2.600" fill="none" stroke-width="1"/></g>
<g fill="none" stroke="#1b8fcf" stroke-width="1.700" stroke-linejoin="round" stroke-linecap="round"><path d="M1548.500,218.400 H1566.500 a4 4 0 0 1 4 4 V239.500 a4 4 0 0 1 -4 4 H1562.200 L1557,251.200 L1552.200,243.500 H1548.500 a4 4 0 0 1 -4 -4 V222.400 a4 4 0 0 1 4 -4z"/><path d="M1551,225.500 H1563.500 M1551,229 H1563 M1551,232.500 H1563.500 M1551,236 H1559" stroke-width="1.200"/></g>
<rect x="1376" y="269.500" width="171" height="37" rx="2.500" fill="#f6f7f9" stroke="#e6e8ec" stroke-width="1"/>
<rect x="1550" y="269.500" width="37" height="37" rx="2.500" fill="#f6f7f9" stroke="#e6e8ec" stroke-width="1"/>
<text x="1384.600" y="291.800" font-size="12.400" fill="#55617a">Basic Shapes</text>
<path d="M1532.800,285.600 L1535.700,281.900 L1538.600,285.600z M1532.800,290.200 L1535.700,293.900 L1538.600,290.200z" fill="#1d2129"/>
<circle cx="1566" cy="286.600" r="7" fill="none" stroke="#111" stroke-width="1.900"/><path d="M1571.200,291.800 L1576.600,297.200" stroke="#111" stroke-width="2.200" stroke-linecap="round"/>
<rect x="1374.8" y="316" width="68.200" height="76.300" rx="3" fill="#f6f7f9"/>
<rect x="1447.0" y="316" width="68.200" height="76.300" rx="3" fill="#f6f7f9"/>
<rect x="1519.4" y="316" width="68.200" height="76.300" rx="3" fill="#f6f7f9"/>
<rect x="1374.8" y="398.2" width="68.200" height="76.300" rx="3" fill="#f6f7f9"/>
<rect x="1447.0" y="398.2" width="68.200" height="76.300" rx="3" fill="#f6f7f9"/>
<rect x="1519.4" y="398.2" width="68.200" height="76.300" rx="3" fill="#f6f7f9"/>
<rect x="1374.8" y="484.8" width="68.200" height="76.300" rx="3" fill="#f6f7f9"/>
<rect x="1447.0" y="484.8" width="68.200" height="76.300" rx="3" fill="#f6f7f9"/>
<rect x="1519.4" y="484.8" width="68.200" height="76.300" rx="3" fill="#f6f7f9"/>
<rect x="1374.8" y="571.1" width="68.200" height="76.300" rx="3" fill="#f6f7f9"/>
<rect x="1447.0" y="571.1" width="68.200" height="76.300" rx="3" fill="#f6f7f9"/>
<rect x="1519.4" y="571.1" width="68.200" height="76.300" rx="3" fill="#f6f7f9"/>
<rect x="1374.8" y="657.4" width="68.200" height="76.300" rx="3" fill="#f6f7f9"/>
<rect x="1447.0" y="657.4" width="68.200" height="76.300" rx="3" fill="#f6f7f9"/>
<rect x="1519.4" y="657.4" width="68.200" height="76.300" rx="3" fill="#f6f7f9"/>
<rect x="1374.8" y="743.7" width="68.200" height="76.300" rx="3" fill="#f6f7f9"/>
<rect x="1447.0" y="743.7" width="68.200" height="76.300" rx="3" fill="#f6f7f9"/>
<rect x="1519.4" y="743.7" width="68.200" height="76.300" rx="3" fill="#f6f7f9"/>
<rect x="1374.8" y="830" width="68.200" height="76.300" rx="3" fill="#f6f7f9"/>
<rect x="1447.0" y="830" width="68.200" height="76.300" rx="3" fill="#f6f7f9"/>
<rect x="1519.4" y="830" width="68.200" height="76.300" rx="3" fill="#f6f7f9"/>
<g transform="translate(1374.8,316)" stroke="#8a8f99" stroke-width=".8" stroke-linejoin="round"><polygon points="25.2,15 54.4,19.7 46.4,34.8 12,29.5" fill="url(#gst)"/><polygon points="12,29.5 46.4,34.8 44.9,63.2 14.2,56.6" fill="url(#gst2)"/><polygon points="46.4,34.8 54.4,19.7 52.100,45.2 44.9,63.2" fill="url(#gst)"/></g>
<g transform="translate(1447.0,316)" stroke="#8a8f99" stroke-width=".8"><path d="M17.400,25 V52.800 A15.600,7.600 0 0 0 50.800,52.800 V25z" fill="url(#gst2)"/><ellipse cx="34.100" cy="25" rx="16.700" ry="8" fill="url(#gst)"/></g>
<g transform="translate(1519.4,316)"><circle cx="34.100" cy="37.900" r="16.800" fill="url(#gst)" stroke="#8a8f99" stroke-width=".8"/><circle cx="34.100" cy="37.900" r="16.800" fill="url(#ggr)"/></g>
<g transform="translate(1374.8,398.2)" stroke="#8e1220" stroke-width=".6" stroke-linejoin="round"><polygon points="25.2,15 54.4,19.7 46.4,34.8 12,29.5" fill="#cf1a2b"/><polygon points="12,29.5 46.4,34.8 44.9,63.2 14.2,56.6" fill="#b01523"/><polygon points="46.4,34.8 54.4,19.7 52.100,45.2 44.9,63.2" fill="#c21727"/></g>
<g transform="translate(1447.0,398.2)"><path d="M17.400,25 V52.800 A15.600,7.600 0 0 0 50.800,52.800 V25z" fill="url(#gor)" stroke="#a85a10" stroke-width=".6"/><ellipse cx="34.100" cy="25" rx="16.700" ry="8" fill="#dc7a1b" stroke="#a85a10" stroke-width=".6"/></g>
<g transform="translate(1519.4,398.2)"><circle cx="34.100" cy="38.800" r="21" fill="url(#gsh)"/><circle cx="34.100" cy="38.200" r="16.300" fill="url(#gbl)"/></g>
<g stroke-linejoin="round"><path d="M1395.400,539.500 L1396.400,524.500 L1401.700,514 L1412,508 L1414,505 L1419,504.500 L1424,510 L1424,514 L1422.900,523 L1415.500,533.500 Z" fill="#8d9ecf" stroke="#6f80b5" stroke-width=".6"/><path d="M1395.400,536.500 L1396.400,521.500 L1401.700,511 L1412,505.500 L1414,502.500 L1419,502 L1424,507.500 L1421.500,510 L1422.900,519.500 L1415.500,530 Z" fill="#bccaf5" stroke="#6f80b5" stroke-width=".7"/><circle cx="1409.600" cy="520" r="3" fill="#9fb0e0" stroke="#5c6da5" stroke-width=".8"/><path d="M1407.600,522.200 L1397.600,533" stroke="#5c6da5" stroke-width="1" fill="none"/></g>
<path d="M1481.100,495 V549.500" stroke="#c87af0" stroke-width="1" stroke-dasharray="5 2.500" fill="none"/>
<path d="M1481.100,504 C1483.500,504 1483,512 1485,517 C1488,523.500 1501,524.500 1501.200,528.600 C1501.200,532.500 1489,533.500 1485.500,535.500 C1483.500,537 1483.500,543.500 1481.100,543.500 C1478.700,543.500 1478.700,537 1476.700,535.500 C1473.200,533.500 1461,532.500 1461,528.600 C1461.200,524.500 1474.200,523.500 1477.200,517 C1479.200,512 1478.700,504 1481.100,504z" fill="#c2f0b4" stroke="#9ed193" stroke-width=".8"/>
<path d="M1462,529.500 C1468,533 1494,533 1500.200,529.500" fill="none" stroke="#9ed193" stroke-width="1"/>
<g filter="url(#bsh)"><rect x="1452.100" y="550.400" width="58.200" height="18.400" rx="9.200" fill="#1aac57"/></g><text x="1481.300" y="563.300" font-size="10.200" font-weight="bold" fill="#e4fbec" text-anchor="middle">New!</text>
<g stroke-linejoin="round" stroke-linecap="round" fill="none"><path d="M1541,517 L1541.500,533 M1546.500,515 L1548,534 M1553.500,522 L1556,538 M1560,515 L1564,541 M1566.500,514 L1566.500,543" stroke="#6f9fca" stroke-width="5.500"/><path d="M1540.500,530 L1541,518 C1542,512 1547,512 1548,518 L1550,529 C1551,534 1555,533 1555.500,528 L1557,517 C1558,511 1565,509 1566.500,516" stroke="#93bde0" stroke-width="5"/></g>
<ellipse cx="1409.100" cy="616" rx="24" ry="22" fill="url(#gsh)"/><path d="M1409.100,594.800 L1393.200,621.500 A15.900,8.500 0 0 0 1425,621.500 Z" fill="url(#gpu)"/>
<ellipse cx="1481" cy="614" rx="25" ry="22" fill="url(#gsh)"/><g stroke="#b89a10" stroke-width=".6" stroke-linejoin="round"><polygon points="1481.100,595.900 1461.400,627.600 1491.700,634.600" fill="#e3c31a"/><polygon points="1481.100,595.900 1491.700,634.600 1499.500,616" fill="#f6d81e"/></g>
<ellipse cx="1553" cy="612" rx="25" ry="20" fill="url(#gsh)"/><g stroke="#27762f" stroke-width=".6" stroke-linejoin="round"><polygon points="1532.900,621.300 1557.900,595.900 1549.900,611.400 1564.200,627.600" fill="#2f8c38"/><polygon points="1532.900,621.300 1549.900,611.400 1564.200,627.600" fill="#2a7f33"/><polygon points="1557.900,595.900 1572.100,610.700 1564.200,627.600 1549.900,611.400" fill="#43b54d"/></g>
<ellipse cx="1409" cy="699" rx="27" ry="14" fill="url(#gsh)"/><text transform="translate(1387.500,700.500) rotate(9) skewX(-12) scale(.92,1.120)" font-size="17.500" font-weight="bold" fill="#8e0f1a" letter-spacing="-1.300">TEXT</text><text transform="translate(1386.600,698.700) rotate(9) skewX(-12) scale(.92,1.120)" font-size="17.500" font-weight="bold" fill="#cf1826" letter-spacing="-1.300">TEXT</text>
<ellipse cx="1480" cy="700" rx="26" ry="17" fill="url(#gsh)"/><g stroke="#3a8fa3" stroke-width=".6" stroke-linejoin="round"><path d="M1459.600,704 C1461,692 1469,683 1478,682.500 L1494,685 C1500,688 1502,698 1500.500,707 L1493,713.700 L1459.600,704z" fill="#62bccd"/><path d="M1459.600,704 C1461,692 1469,683 1478,682.500 C1487,684 1493,700 1493,713.700z" fill="#4fa9bc"/></g>
<ellipse cx="1553.500" cy="702" rx="24" ry="16" fill="url(#gsh)"/><path d="M1537,703.500 C1537,694 1544,686.900 1553.500,686.900 C1563,686.900 1570,694 1570,703.500 C1570,708.500 1563,711.500 1553.500,711.500 C1544,711.500 1537,708.500 1537,703.500z" fill="#e2168e"/><path d="M1537,703.500 C1537,708.500 1544,711.500 1553.500,711.500 C1563,711.500 1570,708.500 1570,703.500 C1568,707 1562,709 1553.500,709 C1545,709 1539,707 1537,703.500z" fill="#c01078"/>
<ellipse cx="1409.500" cy="783" rx="24" ry="15" fill="url(#gsh)"/><ellipse cx="1409.200" cy="782.800" rx="11.800" ry="6.600" fill="none" stroke="#1395d6" stroke-width="9"/><ellipse cx="1409.200" cy="781.200" rx="11.800" ry="6" fill="none" stroke="#24a9e6" stroke-width="4"/>
<ellipse cx="1481" cy="784" rx="24" ry="16" fill="url(#gsh)"/><path d="M1465,778 V786 A16,7.500 0 0 0 1497,786 V778z" fill="#d57318"/><ellipse cx="1481" cy="778" rx="16" ry="7.500" fill="#e8851f"/><ellipse cx="1481.200" cy="778.600" rx="8" ry="4.200" fill="#b9631a"/><ellipse cx="1481.200" cy="780.200" rx="6.400" ry="2.600" fill="#dc7c1c"/>
<ellipse cx="1553.500" cy="784" rx="24" ry="15" fill="url(#gsh)"/><path d="M1537,778 V785.500 A16.500,8 0 0 0 1570,785.500 V778" fill="#8a5a3c"/><ellipse cx="1553.500" cy="778" rx="16.500" ry="8" fill="#9a6a48"/><ellipse cx="1553.500" cy="778.800" rx="14.600" ry="6.600" fill="#e6e6e8" stroke="#6a4028" stroke-width=".9"/>
<ellipse cx="1409" cy="866" rx="26" ry="14" fill="url(#gsh)"/><polygon points="1386.500,859.400 1420.300,864.700 1423.500,871 1386.500,871" fill="#2b3f8e"/>
<ellipse cx="1481" cy="862" rx="25" ry="18" fill="url(#gsh)"/><polygon points="1464.700,851.400 1466.700,858.900 1484.200,862.200 1498.700,856.400 1498.700,871 1464.700,871" fill="#2a3d8c"/><polygon points="1464.700,851.400 1478,845.900 1494.700,848.100 1498.700,856.400 1484.200,862.200 1466.700,858.900" fill="#3a4fa2"/>
<ellipse cx="1553.500" cy="866" rx="24" ry="14" fill="url(#gsh)"/><polygon points="1553.100,853.400 1540.600,860.200 1539,871 1569.500,871 1568.700,861.400" fill="#e01b2d"/><path d="M1553.100,853.400 L1547,864 L1561.500,864.500 Z M1540.600,860.200 L1547,864 L1544,871 M1561.500,864.500 L1568.700,861.400 M1561.500,864.500 L1564,871" fill="#f02a3c" stroke="#b01525" stroke-width=".6"/>
<rect x="1585.800" y="316" width="5.400" height="399" rx="2.700" fill="#c1c1c3"/>
</svg>
<!--/SIDE-->
</div>

<!-- collapse handle -->
<div class="abs" style="left:1358px;top:518px;width:13.500px;height:38.500px;background:#f0f1f4;border:1px solid #dce2ec;border-right:none"></div>
<svg class="ico" style="left:1360px;top:526px" width="12" height="24" viewBox="1360 526 12 24"><path d="M1363.500,529.400 L1368.700,538.200 L1363.800,546.600" fill="none" stroke="#0c0d10" stroke-width="1.600" stroke-linecap="square" stroke-linejoin="miter"/></svg>

<!-- ===== OS taskbar ===== -->
<div id="taskbar" class="abs">
<!--TASK-->
<svg class="abs" style="left:0;top:-1px" width="1596" height="28" viewBox="0 870 1596 28" font-family="Liberation Sans, sans-serif">
  <defs><linearGradient id="rdg" x1="0" y1="0" x2="0" y2="1"><stop offset="0" stop-color="#f5672e"/><stop offset="1" stop-color="#e8324f"/></linearGradient></defs>
  <!-- mint menu -->
  <circle cx="13.200" cy="884.600" r="7.700" fill="none" stroke="#e6e6e6" stroke-width="1.500"/>
  <path d="M9.800,881 V886.200 a1.400 1.400 0 0 0 1.400 1.400 H15.200 a1.400 1.400 0 0 0 1.400 -1.400 V883.600 a1.300 1.300 0 0 0 -2.600 0 V885.600 M14,883.600 a1.300 1.300 0 0 0 -2.600 0 V885.600" fill="none" stroke="#e6e6e6" stroke-width="1.100" stroke-linecap="round"/>
  <!-- desktop -->
  <rect x="32.200" y="878" width="15.300" height="13.600" rx="1" fill="#f3c26c"/><rect x="32.200" y="878" width="15.300" height="2" rx="1" fill="#f7d48e"/>
  <rect x="56" y="875" width="1.200" height="18.700" fill="#707074"/>
  <!-- red app -->
  <rect x="65.600" y="876.600" width="15" height="16" rx="3" fill="url(#rdg)"/>
  <path d="M73.100,880 a4.600 4.600 0 1 0 4.300 3 " fill="none" stroke="#fff" stroke-width="1.800" stroke-linecap="round"/><path d="M72,879.200 c2,0 3.400,1.200 3.200,3 c-.2,1.400 -1.600,2 -2.800,1.400 c1,-.4 1.200,-1.400 .6,-2.200 c-.4,-.6 -1,-.8 -1,-2.200z" fill="#fff"/>
  <!-- terminal -->
  <rect x="91" y="876.600" width="16.400" height="16" rx="2.500" fill="#141416" stroke="#3a3a3e" stroke-width=".8"/>
  <text x="93.800" y="884" font-size="5.500" font-weight="bold" fill="#e8e8e8">$_</text>
  <!-- folder -->
  <path d="M118.800,879.500 a1 1 0 0 1 1 -1 H124.500 l1.500 1.600 H132.800 a1 1 0 0 1 1 1 V890.800 a1 1 0 0 1 -1 1 H119.800 a1 1 0 0 1 -1 -1z" fill="#e9b458"/><rect x="118.800" y="881.800" width="15" height="10" rx="1" fill="#f2c56e"/>
  <!-- active task -->
  <rect x="139.800" y="871" width="166.100" height="27" fill="#1e9edf"/>
  <rect x="142.400" y="879" width="12.800" height="12.800" rx="2.500" fill="url(#rdg)"/>
  <path d="M148.800,882 a3.500 3.500 0 1 0 3.300 2.300" fill="none" stroke="#fff" stroke-width="1.500" stroke-linecap="round"/><path d="M148,881.400 c1.600,0 2.600,1 2.400,2.400 c-.2,1 -1.200,1.500 -2.100,1 c.8,-.3 .9,-1.100 .5,-1.700 c-.3,-.5 -.8,-.6 -.8,-1.700z" fill="#fff"/>
  <text x="163.900" y="888.200" font-size="11.200" fill="#fff" letter-spacing="-.020">3D design Ingenious Amur…</text>
  <!-- inkscape -->
  <rect x="309.200" y="879.200" width="12" height="12" rx="2" fill="#f0f0f0"/>
  <path d="M315.200,880.800 L319.600,885.200 c.6,.6 .2,1.200 -.6,1.200 h-1.200 l.8,1.600 h-7.200 l.8,-1.600 h-1.200 c-.8,0 -1.200,-.6 -.6,-1.200z" fill="#222"/><path d="M313.600,889 h3.200 l-1.600,1.400z" fill="#222"/>
  <text x="329.300" y="888.200" font-size="11.200" fill="#dededf" letter-spacing="-.020">Inkscape 1.2.2 (b0a84865…</text>
  <!-- tray: dropbox -->
  <g fill="#f2f2f2"><path d="M1359.700,879 l3.500,2.200 l-3.500,2.200 l-3.500,-2.200z M1366.700,879 l3.500,2.200 l-3.500,2.200 l-3.500,-2.200z M1359.700,883.600 l3.500,2.200 l-3.500,2.200 l-3.500,-2.200z M1366.700,883.600 l3.500,2.200 l-3.500,2.200 l-3.500,-2.200z M1363.200,886.800 l3.300,2.100 l-3.300,2.100 l-3.300,-2.100z"/></g>
  <!-- bluetooth -->
  <ellipse cx="1380.600" cy="884.600" rx="5.700" ry="8.200" fill="#dcdcdc"/>
  <path d="M1377.800,881.400 L1383,886.800 L1380.400,889.400 V879.600 L1383,882.200 L1377.800,887.600" fill="none" stroke="#4a4a4e" stroke-width="1"/>
  <circle cx="1385.300" cy="890" r="2.800" fill="#c9c9c9" stroke="#2b2b2e" stroke-width=".8"/>
  <!-- bell -->
  <path d="M1401.100,877.200 c3.200,0 4.600,2.400 4.600,5.200 c0,3 .6,4.200 1.800,5.400 v1 h-12.800 v-1 c1.200,-1.200 1.800,-2.400 1.800,-5.400 c0,-2.800 1.400,-5.200 4.600,-5.200z M1399.500,890 h3.200 a1.600 1.600 0 0 1 -3.200 0z" fill="#dedede"/>
  <!-- shield -->
  <path d="M1428.700,877 c2,1.400 4.200,2 6.600,2 c0,6 -2,10.400 -6.600,12.600 c-4.600,-2.200 -6.600,-6.600 -6.600,-12.600 c2.400,0 4.600,-.6 6.600,-2z" fill="none" stroke="#e0e0e0" stroke-width="1.600" stroke-linejoin="round"/>
  <path d="M1428.700,879.400 c1.400,.8 2.800,1.200 4.400,1.400 c-.2,4.200 -1.600,7 -4.400,8.800z" fill="#9a9a9a"/>
  <circle cx="1434.200" cy="890" r="3.100" fill="#f57c1f"/>
  <!-- clipboard -->
  <rect x="1449.200" y="879.600" width="12.800" height="12" rx="1.500" fill="none" stroke="#e6e6e6" stroke-width="1.700"/><rect x="1453" y="877.200" width="5.200" height="3.600" rx="1" fill="#e6e6e6"/>
  <path d="M1455.600,882.800 V887.200 M1455.600,889 v.2" stroke="#e6e6e6" stroke-width="1.700" stroke-linecap="round"/>
  <!-- wifi -->
  <g fill="none" stroke-linecap="round"><path d="M1474.600,882.800 a10.500 10.500 0 0 1 14.800 0" stroke="#8a8a8c" stroke-width="1.700"/><path d="M1477,885.600 a7.100 7.100 0 0 1 10 0" stroke="#e6e6e6" stroke-width="1.700"/><path d="M1479.400,888.200 a3.700 3.700 0 0 1 5.200 0" stroke="#e6e6e6" stroke-width="1.700"/></g><circle cx="1482" cy="890.600" r="1.300" fill="#e6e6e6"/>
  <!-- battery -->
  <path d="M1504,879.600 h2.600 v-2 h5 v2 h2.800 v12 h-10.400z" fill="none" stroke="#d8d8d8" stroke-width="1.600" stroke-linejoin="round"/>
  <path d="M1509.600,880.500 l-2.600,4.600 h2 l-1,4 l3.400,-5 h-2.200z" fill="#bdbdbd"/>
  <path d="M1514.600,884.400 l-3.400,4.800 h2.400 l-1,3.800 l4.400,-5.800 h-2.600 l1.200,-2.800z" fill="#8c8c8e"/>
  <!-- volume -->
  <path d="M1527.600,882 h3 l4.600,-4 v13.600 l-4.600,-4 h-3z" fill="#e6e6e6"/>
  <path d="M1538,881 a5 5 0 0 1 0 7.600" fill="none" stroke="#e6e6e6" stroke-width="1.500" stroke-linecap="round"/><path d="M1540.400,878.400 a8.600 8.600 0 0 1 0 12.800" fill="none" stroke="#77777a" stroke-width="1.500" stroke-linecap="round"/>
  <text x="1572.800" y="882.200" font-size="9.300" font-weight="bold" fill="#f2f2f2" text-anchor="middle" letter-spacing="-.350">07:15</text>
  <text x="1573" y="894.400" font-size="9.600" fill="#d6dbe6" text-anchor="middle" letter-spacing="-.450">2025-12-09</text>
</svg>

<!--/TASK-->
</div>

</div>
</body>
</html>
